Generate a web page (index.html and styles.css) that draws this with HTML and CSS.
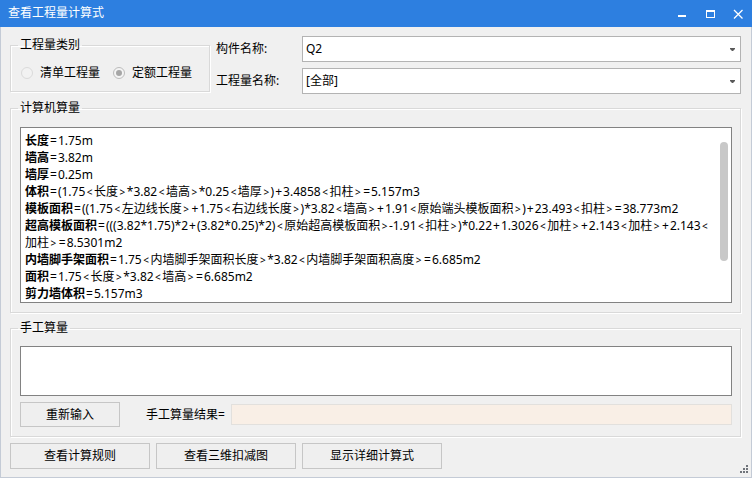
FILE: index.html
```html
<!DOCTYPE html>
<html lang="zh-CN">
<head>
<meta charset="utf-8">
<title>查看工程量计算式</title>
<link rel="stylesheet" href="styles.css">
</head>
<body>
<div class="window">
  <div class="titlebar">
    <span class="title">查看工程量计算式</span>
    <div class="controls">
      <svg class="ctl" width="28" height="27" viewBox="0 0 28 27"><rect x="10" y="15" width="8" height="2" fill="#fff"/></svg>
      <svg class="ctl" width="28" height="27" viewBox="0 0 28 27"><rect x="10.5" y="10.5" width="8" height="7" fill="none" stroke="#fff" stroke-width="1"/><rect x="10" y="10" width="9" height="2" fill="#fff"/></svg>
      <svg class="ctl" width="28" height="27" viewBox="0 0 28 27"><path d="M10 10 L18.5 18.5 M18.5 10 L10 18.5" stroke="#fff" stroke-width="1.3" fill="none"/></svg>
    </div>
  </div>
  <div class="content">
    <div class="top">
      <fieldset class="group type-group">
        <legend>工程量类别</legend>
        <div class="radios">
          <span class="radio"><span class="circle disabled"></span>清单工程量</span>
          <span class="radio"><span class="circle checked"><span class="dot"></span></span>定额工程量</span>
        </div>
      </fieldset>
      <div class="fields">
        <div class="field">
          <span class="flabel">构件名称:</span>
          <div class="combo"><span class="combo-text">Q2</span><svg class="arrow" width="5" height="3" viewBox="0 0 5 3"><path d="M0 0H5V1L3 3H2L0 1Z" fill="#5a5a5a"/></svg></div>
        </div>
        <div class="field">
          <span class="flabel">工程量名称:</span>
          <div class="combo"><span class="combo-text">[全部]</span><svg class="arrow" width="5" height="3" viewBox="0 0 5 3"><path d="M0 0H5V1L3 3H2L0 1Z" fill="#5a5a5a"/></svg></div>
        </div>
      </div>
    </div>

    <fieldset class="group calc-group">
      <legend>计算机算量</legend>
      <div class="textbox">
        <div class="lines">
          <div class="line"><b>长度</b><span class="e">=</span>1.75m</div>
          <div class="line"><b>墙高</b><span class="e">=</span>3.82m</div>
          <div class="line"><b>墙厚</b><span class="e">=</span>0.25m</div>
          <div class="line"><b>体积</b><span class="e">=</span>(1.75<span class="a">&lt;</span>长度<span class="a">&gt;</span>*3.82<span class="a">&lt;</span>墙高<span class="a">&gt;</span>*0.25<span class="a">&lt;</span>墙厚<span class="a">&gt;</span>)<span class="e">+</span>3.4858<span class="a">&lt;</span>扣柱<span class="a">&gt;</span><span class="e">=</span>5.157m3</div>
          <div class="line"><b>模板面积</b><span class="e">=</span>((1.75<span class="a">&lt;</span>左边线长度<span class="a">&gt;</span><span class="e">+</span>1.75<span class="a">&lt;</span>右边线长度<span class="a">&gt;</span>)*3.82<span class="a">&lt;</span>墙高<span class="a">&gt;</span><span class="e">+</span>1.91<span class="a">&lt;</span>原始端头模板面积<span class="a">&gt;</span>)<span class="e">+</span>23.493<span class="a">&lt;</span>扣柱<span class="a">&gt;</span><span class="e">=</span>38.773m2</div>
          <div class="line"><b>超高模板面积</b><span class="e">=</span>(((3.82*1.75)*2<span class="e">+</span>(3.82*0.25)*2)<span class="a">&lt;</span>原始超高模板面积<span class="a">&gt;</span>-1.91<span class="a">&lt;</span>扣柱<span class="a">&gt;</span>)*0.22<span class="e">+</span>1.3026<span class="a">&lt;</span>加柱<span class="a">&gt;</span><span class="e">+</span>2.143<span class="a">&lt;</span>加柱<span class="a">&gt;</span><span class="e">+</span>2.143<span class="a">&lt;</span></div>
          <div class="line">加柱<span class="a">&gt;</span><span class="e">=</span>8.5301m2</div>
          <div class="line"><b>内墙脚手架面积</b><span class="e">=</span>1.75<span class="a">&lt;</span>内墙脚手架面积长度<span class="a">&gt;</span>*3.82<span class="a">&lt;</span>内墙脚手架面积高度<span class="a">&gt;</span><span class="e">=</span>6.685m2</div>
          <div class="line"><b>面积</b><span class="e">=</span>1.75<span class="a">&lt;</span>长度<span class="a">&gt;</span>*3.82<span class="a">&lt;</span>墙高<span class="a">&gt;</span><span class="e">=</span>6.685m2</div>
          <div class="line"><b>剪力墙体积</b><span class="e">=</span>5.157m3</div>
        </div>
        <div class="scroll"><div class="thumb"></div></div>
      </div>
    </fieldset>

    <fieldset class="group manual-group">
      <legend>手工算量</legend>
      <div class="manual-box"></div>
      <div class="manual-row">
        <span class="btn reset">重新输入</span>
        <span class="result-label">手工算量结果=</span>
        <div class="result"></div>
      </div>
    </fieldset>

    <div class="buttons">
      <span class="btn wide">查看计算规则</span>
      <span class="btn wide">查看三维扣减图</span>
      <span class="btn wide">显示详细计算式</span>
    </div>

    <svg class="grip" width="10" height="10" viewBox="0 0 10 10">
      <rect x="6" y="0" width="2" height="2" fill="#70747a"/>
      <rect x="3" y="3" width="2" height="2" fill="#70747a"/>
      <rect x="6" y="3" width="2" height="2" fill="#70747a"/>
      <rect x="0" y="6" width="2" height="2" fill="#70747a"/>
      <rect x="3" y="6" width="2" height="2" fill="#70747a"/>
      <rect x="6" y="6" width="2" height="2" fill="#70747a"/>
    </svg>
  </div>
</div>
</body>
</html>
```

FILE: styles.css
```css
* { box-sizing: border-box; }

html, body {
  margin: 0;
  padding: 0;
  background: #f0f0f0;
}

body {
  font-family: "Noto Sans", "Noto Sans CJK SC", sans-serif;
  font-size: 12px;
  color: #000;
}

.window {
  width: 752px;
  height: 478px;
  display: flex;
  flex-direction: column;
  background: #f0f0f0;
}

.titlebar {
  height: 27px;
  flex: none;
  background: #2d7fe0;
  display: flex;
  align-items: center;
  justify-content: space-between;
}

.title {
  color: #fff;
  font-size: 12px;
  line-height: 16px;
  padding-left: 8px;
  padding-bottom: 1px;
}

.controls {
  display: flex;
  height: 27px;
}

.ctl { display: block; }

.content {
  position: relative;
  flex: 1;
  border: 1px solid #c4cbd6;
  border-top: none;
  padding: 9px 10px 0 9px;
  display: flex;
  flex-direction: column;
}

/* group boxes */
.group {
  margin: 0;
  min-width: 0;
  border: 1px solid #d9d9d9;
  box-shadow: 1px 1px 0 #fff, inset 1px 1px 0 #fff;
  padding: 0 8px 9px 9px;
}

.group legend {
  font-size: 12px;
  line-height: 16px;
  padding: 0 2px;
  margin-left: -2px;
}

.top {
  display: flex;
  align-items: flex-start;
  height: 58px;
}

.type-group {
  width: 200px;
  flex: none;
  margin-top: 1px;
  padding-bottom: 10px;
}

.radios {
  display: flex;
  align-items: center;
  height: 16px;
  margin-top: 12px;
  margin-left: 1px;
  white-space: nowrap;
}

.radio {
  display: flex;
  align-items: center;
  flex: none;
  line-height: 16px;
  margin-right: 13px;
}

.circle {
  width: 12px;
  height: 12px;
  flex: none;
  border-radius: 50%;
  margin-right: 7px;
  display: flex;
  align-items: center;
  justify-content: center;
}

.circle.disabled {
  border: 1px solid #dadada;
  background: #f2f2f2;
}

.circle.checked {
  border: 1px solid #bcbcbc;
  background: #f4f4f4;
}

.dot {
  width: 6px;
  height: 6px;
  border-radius: 50%;
  background: #a6a6a6;
}

.fields {
  flex: 1;
  margin-left: 6px;
  display: flex;
  flex-direction: column;
  gap: 6px;
}

.field {
  display: flex;
  align-items: center;
  height: 26px;
}

.flabel {
  width: 86px;
  flex: none;
  line-height: 16px;
}

.combo {
  flex: 1;
  height: 26px;
  background: #fff;
  border: 1px solid #b3b3b3;
  display: flex;
  align-items: center;
  justify-content: space-between;
  padding: 0 5px 0 3px;
}

.combo-text { line-height: 16px; }

.arrow { display: block; margin-top: 1px; }

/* computer calc */
.calc-group {
  margin-top: 6px;
}

.textbox {
  margin-top: 11px;
  height: 176px;
  background: #fff;
  border: 1px solid #828282;
  display: flex;
}

.lines {
  flex: 1;
  padding: 4px 0 0 4px;
  overflow: hidden;
}

.line {
  height: 17px;
  line-height: 17px;
  white-space: nowrap;
}

.line b { font-weight: 700; }

.line .a {
  font-size: 10px;
  line-height: 0;
  margin: 0 1.5px;
}

.line .e {
  margin: 0 1px;
}

.scroll {
  width: 8px;
  flex: none;
  margin: 14px 3px 0 6px;
}

.thumb {
  height: 119px;
  border-radius: 4px;
  background: #c8c8c8;
}

/* manual */
.manual-group {
  margin-top: 7px;
}

.manual-box {
  margin-top: 10px;
  height: 50px;
  background: #fff;
  border: 1px solid #828282;
}

.manual-row {
  margin-top: 6px;
  height: 25px;
  display: flex;
  align-items: center;
}

.btn {
  display: flex;
  align-items: center;
  justify-content: center;
  background: #efefef;
  border: 1px solid #c6c6c6;
  line-height: 16px;
}

.reset {
  width: 100px;
  height: 25px;
}

.result-label {
  margin-left: 26px;
  margin-right: 6px;
  line-height: 16px;
}

.result {
  flex: 1;
  height: 21px;
  background: #f9efe6;
  border: 1px solid #e2e0dd;
}

.buttons {
  margin-top: 6px;
  display: flex;
  gap: 6px;
}

.wide {
  width: 140px;
  height: 26px;
}

.grip {
  position: absolute;
  right: 1px;
  bottom: 2px;
}
```
